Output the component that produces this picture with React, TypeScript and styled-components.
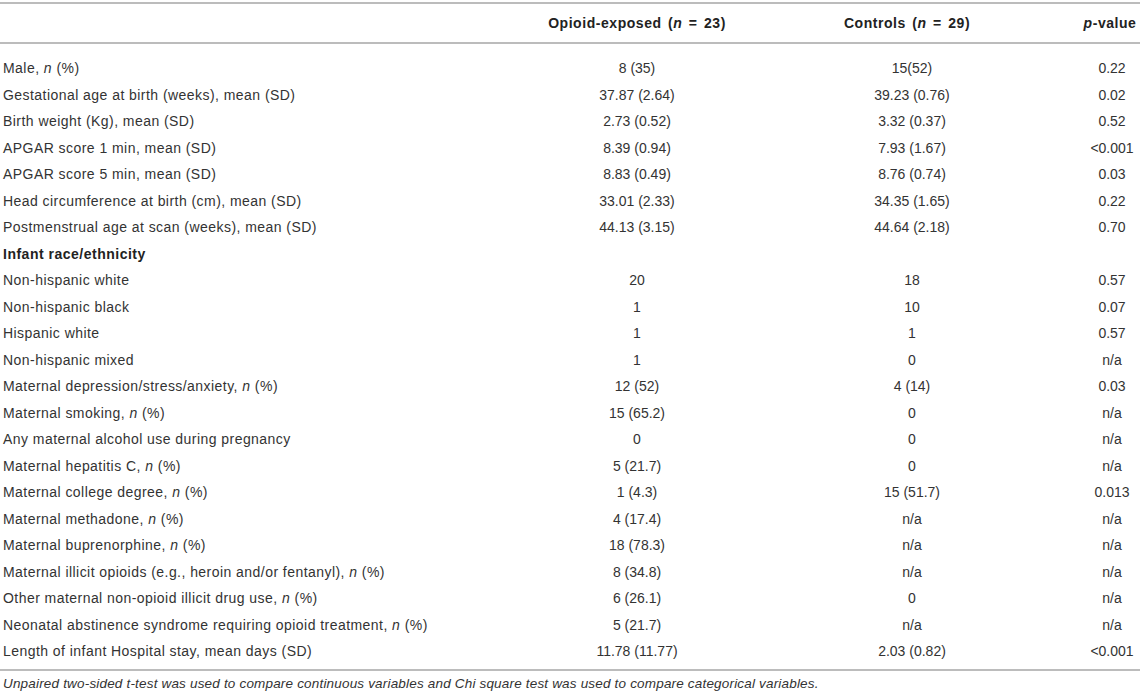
import React from "react";
import styled, { createGlobalStyle } from "styled-components";

const Global = createGlobalStyle`
  html, body { margin: 0; padding: 0; background: #fff; }
  body { font-family: "Liberation Sans", Arial, Helvetica, sans-serif; color: #333; }
`;

const Page = styled.div`
  width: 1140px;
  padding-top: 2px;
`;

const Table = styled.div`
  border-top: 2px solid #bcbcbc;
  border-bottom: 2px solid #bcbcbc;
`;

const Head = styled.div`
  display: grid;
  grid-template-columns: 534px 206px 344px 56px;
  height: 38px;
  align-items: center;
  border-bottom: 2px solid #bcbcbc;
  font-weight: bold;
  font-size: 14px;
  letter-spacing: 0.55px;
  word-spacing: 2px;
  color: #222;
`;

const HeadCell = styled.div<{ $shift?: number }>`
  text-align: center;
  white-space: nowrap;
  transform: translateX(${(p) => p.$shift ?? 0}px);
`;

const Body = styled.div`
  padding: 11px 0 4px;
`;

const Row = styled.div`
  display: grid;
  grid-template-columns: 534px 206px 344px 56px;
  height: 26.5px;
  align-items: center;
  font-size: 14px;
`;

const Label = styled.div<{ $bold?: boolean }>`
  padding-left: 3px;
  white-space: nowrap;
  letter-spacing: ${(p) => (p.$bold ? "0.5px" : "0.45px")};
  font-weight: ${(p) => (p.$bold ? "bold" : "normal")};
  color: ${(p) => (p.$bold ? "#222" : "#333")};
`;

const Cell = styled.div`
  text-align: center;
  white-space: nowrap;
`;

const Note = styled.div`
  font-style: italic;
  font-size: 13.5px;
  letter-spacing: 0.18px;
  padding: 5px 0 0 3px;
  line-height: 16px;
`;

const N = () => <i>n</i>;

type R = { label: React.ReactNode; a?: string; b?: string; p?: string; bold?: boolean };

const nPct = (t: string) => (
  <>
    {t}, <N /> (%)
  </>
);

const rows: R[] = [
  { label: nPct("Male"), a: "8 (35)", b: "15(52)", p: "0.22" },
  { label: "Gestational age at birth (weeks), mean (SD)", a: "37.87 (2.64)", b: "39.23 (0.76)", p: "0.02" },
  { label: "Birth weight (Kg), mean (SD)", a: "2.73 (0.52)", b: "3.32 (0.37)", p: "0.52" },
  { label: "APGAR score 1 min, mean (SD)", a: "8.39 (0.94)", b: "7.93 (1.67)", p: "<0.001" },
  { label: "APGAR score 5 min, mean (SD)", a: "8.83 (0.49)", b: "8.76 (0.74)", p: "0.03" },
  { label: "Head circumference at birth (cm), mean (SD)", a: "33.01 (2.33)", b: "34.35 (1.65)", p: "0.22" },
  { label: "Postmenstrual age at scan (weeks), mean (SD)", a: "44.13 (3.15)", b: "44.64 (2.18)", p: "0.70" },
  { label: "Infant race/ethnicity", bold: true },
  { label: "Non-hispanic white", a: "20", b: "18", p: "0.57" },
  { label: "Non-hispanic black", a: "1", b: "10", p: "0.07" },
  { label: "Hispanic white", a: "1", b: "1", p: "0.57" },
  { label: "Non-hispanic mixed", a: "1", b: "0", p: "n/a" },
  { label: nPct("Maternal depression/stress/anxiety"), a: "12 (52)", b: "4 (14)", p: "0.03" },
  { label: nPct("Maternal smoking"), a: "15 (65.2)", b: "0", p: "n/a" },
  { label: "Any maternal alcohol use during pregnancy", a: "0", b: "0", p: "n/a" },
  { label: nPct("Maternal hepatitis C"), a: "5 (21.7)", b: "0", p: "n/a" },
  { label: nPct("Maternal college degree"), a: "1 (4.3)", b: "15 (51.7)", p: "0.013" },
  { label: nPct("Maternal methadone"), a: "4 (17.4)", b: "n/a", p: "n/a" },
  { label: nPct("Maternal buprenorphine"), a: "18 (78.3)", b: "n/a", p: "n/a" },
  { label: nPct("Maternal illicit opioids (e.g., heroin and/or fentanyl)"), a: "8 (34.8)", b: "n/a", p: "n/a" },
  { label: nPct("Other maternal non-opioid illicit drug use"), a: "6 (26.1)", b: "0", p: "n/a" },
  { label: nPct("Neonatal abstinence syndrome requiring opioid treatment"), a: "5 (21.7)", b: "n/a", p: "n/a" },
  { label: "Length of infant Hospital stay, mean days (SD)", a: "11.78 (11.77)", b: "2.03 (0.82)", p: "<0.001" },
];

export default function App() {
  return (
    <Page>
      <Global />
      <Table>
        <Head>
          <Label />
          <HeadCell>
            Opioid-exposed (<i>n</i> = 23)
          </HeadCell>
          <HeadCell $shift={-5}>
            Controls (<i>n</i> = 29)
          </HeadCell>
          <HeadCell $shift={-2}>
            <i>p</i>-value
          </HeadCell>
        </Head>
        <Body>
          {rows.map((r, i) => (
            <Row key={i}>
              <Label $bold={r.bold}>{r.label}</Label>
              <Cell>{r.a}</Cell>
              <Cell>{r.b}</Cell>
              <Cell>{r.p}</Cell>
            </Row>
          ))}
        </Body>
      </Table>
      <Note>
        Unpaired two-sided t-test was used to compare continuous variables and Chi square test was used to compare categorical variables.
      </Note>
    </Page>
  );
}
